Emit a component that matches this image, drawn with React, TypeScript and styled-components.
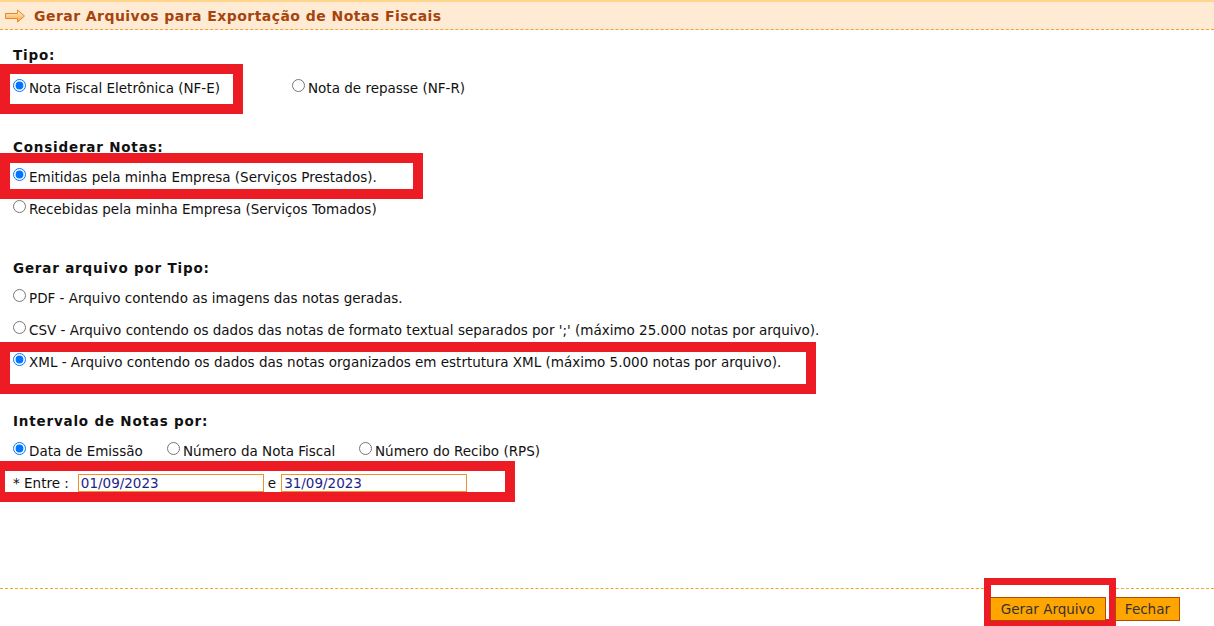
import { createGlobalStyle, styled } from "styled-components";

const GlobalStyle = createGlobalStyle`
    html, body {
        margin: 0;
        padding: 0;
        background: #fff;
    }
    body {
        font-family: "DejaVu Sans", Verdana, sans-serif;
        font-size: 13.5px;
        color: #111;
    }
`;

const Page = styled.div`
    display: flex;
    flex-direction: column;
    min-height: 100vh;
`;

const Header = styled.div`
    display: flex;
    align-items: center;
    gap: 8px;
    height: 27px;
    padding-left: 5px;
    background: #ffebd4;
    border-top: 2px solid #ffd58c;
    border-bottom: 1px dashed #f0a33c;
`;

const Title = styled.h1`
    margin: 0;
    font-size: 14px;
    letter-spacing: 0.45px;
    font-weight: bold;
    color: #a5440e;
`;

const Form = styled.div`
    padding: 15px 0 0 13px;
`;

const Section = styled.div`
    margin-top: 33px;

    &:first-child {
        margin-top: 0;
    }
`;

const Heading = styled.div<{ $after?: number }>`
    height: 20px;
    line-height: 20px;
    font-weight: bold;
    font-size: 13.5px;
    letter-spacing: 0.8px;
    margin-bottom: ${(p) => p.$after ?? 4}px;
`;

const Row = styled.div`
    position: relative;
    display: flex;
    align-items: center;
    height: 32px;
`;

const Option = styled.label<{ $w?: number }>`
    position: relative;
    z-index: 1;
    display: inline-flex;
    align-items: center;
    white-space: nowrap;
    ${(p) => (p.$w ? `width: ${p.$w}px;` : "")}
`;

const Radio = styled.input`
    width: 13px;
    height: 13px;
    margin: 0 3px 5px 0;
`;

const Mark = styled.div<{ $top: number; $left: number; $w: number; $h: number; $bw?: number; $fill?: boolean }>`
    position: absolute;
    top: ${(p) => p.$top}px;
    left: ${(p) => p.$left}px;
    width: ${(p) => p.$w}px;
    height: ${(p) => p.$h}px;
    box-sizing: border-box;
    border: ${(p) => p.$bw ?? 10}px solid #ed1c24;
    background: ${(p) => (p.$fill ? "#fff" : "transparent")};
    pointer-events: none;
`;

const Label = styled.span`
    position: relative;
    z-index: 1;
`;

const DateInput = styled.input`
    position: relative;
    z-index: 1;
    width: 186px;
    height: 18px;
    box-sizing: border-box;
    margin: 0 4px 0 9px;
    padding: 0 2px;
    border: 1px solid #f0902c;
    font-family: "DejaVu Sans", Verdana, sans-serif;
    font-size: 13.5px;
    color: #1e1e8c;
    background: #fff;
    outline: none;

    & + span + & {
        margin-left: 5px;
    }
`;

const Footer = styled.div`
    margin-top: auto;
    display: flex;
    justify-content: flex-end;
    gap: 9px;
    padding: 8px 34px 5px 0;
    border-top: 1px dashed #f5a623;
`;

const ButtonSlot = styled.div`
    position: relative;
`;

const Button = styled.button<{ $pad?: number }>`
    position: relative;
    z-index: 1;
    height: 24px;
    padding: 0 ${(p) => p.$pad ?? 10}px;
    background: #ffa500;
    border: 1px solid #b04a00;
    font-family: "DejaVu Sans", Verdana, sans-serif;
    font-size: 13.5px;
    color: #333;
    cursor: pointer;
`;

function Arrow() {
    return (
        <svg width="21" height="14" viewBox="0 0 21 14">
            <defs>
                <linearGradient id="ag" x1="0" y1="0" x2="0" y2="1">
                    <stop offset="0" stopColor="#fff6dc" />
                    <stop offset="1" stopColor="#f6a33a" />
                </linearGradient>
            </defs>
            <polygon
                points="0.5,4.5 12.5,4.5 12.5,1 19.5,7 12.5,13 12.5,9.5 0.5,9.5"
                fill="url(#ag)"
                stroke="#e3892c"
                strokeWidth="1"
                strokeLinejoin="round"
            />
        </svg>
    );
}

export default function App() {
    return (
        <Page>
            <GlobalStyle />
            <Header>
                <Arrow />
                <Title>Gerar Arquivos para Exportação de Notas Fiscais</Title>
            </Header>
            <Form>
                <Section>
                    <Heading $after={7}>Tipo:</Heading>
                    <Row>
                        <Mark $top={-8} $left={-13} $w={243} $h={50} />
                        <Option $w={279}><Radio type="radio" name="tipo" defaultChecked />Nota Fiscal Eletrônica (NF-E)</Option>
                        <Option><Radio type="radio" name="tipo" />Nota de repasse (NF-R)</Option>
                    </Row>
                </Section>
                <Section>
                    <Heading>Considerar Notas:</Heading>
                    <Row>
                        <Mark $top={-8} $left={-13} $w={423} $h={46} />
                        <Option><Radio type="radio" name="origem" defaultChecked />Emitidas pela minha Empresa (Serviços Prestados).</Option>
                    </Row>
                    <Row>
                        <Option><Radio type="radio" name="origem" />Recebidas pela minha Empresa (Serviços Tomados)</Option>
                    </Row>
                </Section>
                <Section>
                    <Heading>Gerar arquivo por Tipo:</Heading>
                    <Row>
                        <Option><Radio type="radio" name="formato" />PDF - Arquivo contendo as imagens das notas geradas.</Option>
                    </Row>
                    <Row>
                        <Option><Radio type="radio" name="formato" />CSV - Arquivo contendo os dados das notas de formato textual separados por ';' (máximo 25.000 notas por arquivo).</Option>
                    </Row>
                    <Row>
                        <Mark $top={-4} $left={-13} $w={816} $h={52} />
                        <Option><Radio type="radio" name="formato" defaultChecked />XML - Arquivo contendo os dados das notas organizados em estrtutura XML (máximo 5.000 notas por arquivo).</Option>
                    </Row>
                </Section>
                <Section>
                    <Heading>Intervalo de Notas por:</Heading>
                    <Row>
                        <Option $w={154}><Radio type="radio" name="intervalo" defaultChecked />Data de Emissão</Option>
                        <Option $w={192}><Radio type="radio" name="intervalo" />Número da Nota Fiscal</Option>
                        <Option><Radio type="radio" name="intervalo" />Número do Recibo (RPS)</Option>
                    </Row>
                    <Row>
                        <Mark $top={-6} $left={-18} $w={520} $h={41} />
                        <Label>* Entre :</Label>
                        <DateInput defaultValue="01/09/2023" />
                        <Label>e</Label>
                        <DateInput defaultValue="31/09/2023" />
                    </Row>
                </Section>
            </Form>
            <Footer>
                <ButtonSlot>
                    <Mark $top={-19} $left={-6} $w={132} $h={48} $bw={7} $fill />
                    <Button $pad={10}>Gerar Arquivo</Button>
                </ButtonSlot>
                <Button $pad={9}>Fechar</Button>
            </Footer>
        </Page>
    );
}
